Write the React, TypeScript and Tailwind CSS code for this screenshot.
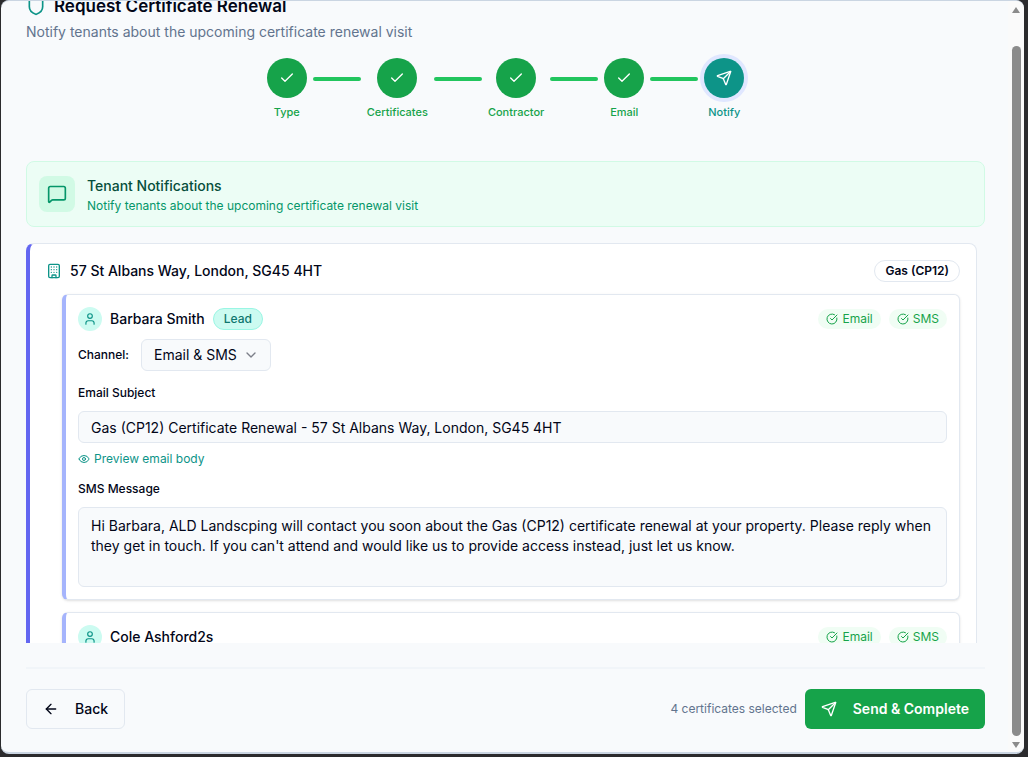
import { ArrowLeft, Building, Check, ChevronDown, CircleCheckBig, Eye, MessageSquare, Send, Shield, User } from 'lucide-react';

const steps = ['Type', 'Certificates', 'Contractor', 'Email', 'Notify'];

interface Tenant {
  id: string;
  name: string;
  lead?: boolean;
  sms: string;
}

const tenants: Tenant[] = [
  {
    id: 'barbara',
    name: 'Barbara Smith',
    lead: true,
    sms: "Hi Barbara, ALD Landscping will contact you soon about the Gas (CP12) certificate renewal at your property. Please reply when they get in touch. If you can't attend and would like us to provide access instead, just let us know.",
  },
  {
    id: 'cole',
    name: 'Cole Ashford2s',
    sms: '',
  },
];

function Stepper() {
  return (
    <ol className="flex items-start justify-center">
      {steps.map((step, index) => {
        const current = index === steps.length - 1;
        return (
          <li key={step} className="flex items-start">
            <div className="flex flex-col items-center">
              <div
                className={`w-10 h-10 rounded-full flex items-center justify-center text-white ${
                  current ? 'bg-[#0d9488] ring-4 ring-indigo-100' : 'bg-[#16a34a]'
                }`}
              >
                {current ? <Send className="w-4 h-4" /> : <Check className="w-4 h-4" />}
              </div>
              <span
                className={`mt-1.5 text-[11px] leading-4 font-medium ${
                  current ? 'text-[#0d9488]' : 'text-[#16a34a]'
                }`}
              >
                {step}
              </span>
            </div>
            {!current && <div className="w-12 h-1 mt-[19px] mx-1.5 rounded-full bg-[#22c55e]" />}
          </li>
        );
      })}
    </ol>
  );
}

function ChannelBadge({ label }: { label: string }) {
  return (
    <span className="flex items-center gap-1 rounded-full bg-green-50 px-2 h-5 text-xs text-[#16a34a]">
      <CircleCheckBig className="w-3 h-3" />
      {label}
    </span>
  );
}

function TenantCard({ tenant }: { tenant: Tenant }) {
  return (
    <div className="bg-white rounded-md border border-l-4 border-slate-200 border-l-[#a5b4fc] shadow-sm p-3">
      <div className="flex items-center justify-between">
        <div className="flex items-center gap-2">
          <span className="w-6 h-6 rounded-full bg-[#ccfbf1] text-[#0d9488] flex items-center justify-center">
            <User className="w-3.5 h-3.5" />
          </span>
          <h3 className="text-sm font-medium text-slate-950">{tenant.name}</h3>
          {tenant.lead && (
            <span className="rounded-full border border-[#99f6e4] bg-[#ccfbf1] px-2.5 text-xs leading-5 font-medium text-[#0f766e]">
              Lead
            </span>
          )}
        </div>
        <div className="flex gap-2">
          <ChannelBadge label="Email" />
          <ChannelBadge label="SMS" />
        </div>
      </div>

      <div className="mt-2 flex items-center gap-3">
        <label htmlFor={`${tenant.id}-channel`} className="text-xs font-medium text-slate-950">
          Channel:
        </label>
        <div className="relative">
          <select
            id={`${tenant.id}-channel`}
            defaultValue="both"
            className="appearance-none w-[130px] h-8 rounded-md border border-slate-200 bg-slate-50 pl-3 pr-8 text-sm text-slate-950"
          >
            <option value="both">Email & SMS</option>
            <option value="email">Email</option>
            <option value="sms">SMS</option>
          </select>
          <ChevronDown className="pointer-events-none absolute right-3 top-2 w-4 h-4 text-slate-950 opacity-50" />
        </div>
      </div>

      <label htmlFor={`${tenant.id}-subject`} className="block mt-3.5 text-xs font-medium text-slate-950">
        Email Subject
      </label>
      <input
        id={`${tenant.id}-subject`}
        type="text"
        defaultValue="Gas (CP12) Certificate Renewal - 57 St Albans Way, London, SG45 4HT"
        className="block w-full h-8 mt-2.5 rounded-md border border-slate-200 bg-slate-50 px-3 text-sm text-slate-950"
      />
      <button type="button" className="mt-2 flex items-center gap-1 text-xs text-[#0d9488]">
        <Eye className="w-3 h-3" />
        Preview email body
      </button>

      <label htmlFor={`${tenant.id}-sms`} className="block mt-3.5 text-xs font-medium text-slate-950">
        SMS Message
      </label>
      <textarea
        id={`${tenant.id}-sms`}
        defaultValue={tenant.sms}
        className="block w-full h-20 mt-2.5 resize-none rounded-md border border-slate-200 bg-slate-50 px-3 py-2 text-sm text-slate-950"
      />
    </div>
  );
}

function ScrollBar() {
  return (
    <div className="w-4 shrink-0 flex flex-col items-center bg-[#fafafa] pt-1.5 pb-1" aria-hidden="true">
      <svg viewBox="0 0 8 6" className="w-2 h-1.5 text-[#8b8b8b]">
        <path d="M4 0 8 6H0z" fill="currentColor" />
      </svg>
      <div className="mt-[33px] mb-1.5 w-[9px] flex-1 rounded-full bg-[#8b8b8b]" />
      <svg viewBox="0 0 8 6" className="w-2 h-1.5 text-[#8b8b8b]">
        <path d="M0 0h8L4 6z" fill="currentColor" />
      </svg>
    </div>
  );
}

export default function App() {
  return (
    <div className="h-screen bg-[#2b2b2d] pl-px pr-1 pb-[3px] font-['Inter',sans-serif]">
      <div className="h-full flex overflow-hidden rounded-lg border-t border-b-2 border-slate-300 bg-slate-50">
        <main className="flex-1 min-w-0 h-full flex flex-col justify-end pl-[25px] pr-[23px] pb-[23px]">
          <header>
            <h1 className="flex items-center gap-2 text-[17px] leading-5 font-semibold text-slate-950">
              <Shield className="w-5 h-5 text-[#0d9488]" />
              Request Certificate Renewal
            </h1>
            <p className="mt-1.5 text-sm text-slate-500">Notify tenants about the upcoming certificate renewal visit</p>
          </header>

          <div className="mt-4">
            <Stepper />
          </div>

          {/* Section banner */}
          <div className="mt-[41px] flex items-center gap-3 rounded-lg border border-[#d1fae5] bg-[#ecfdf5] p-3">
            <div className="w-9 h-9 rounded-lg bg-[#d1fae5] text-[#059669] flex items-center justify-center">
              <MessageSquare className="w-5 h-5" />
            </div>
            <div className="pt-0.5">
              <h2 className="text-sm font-medium text-[#064e3b]">Tenant Notifications</h2>
              <p className="mt-0.5 text-xs text-[#059669]">
                Notify tenants about the upcoming certificate renewal visit
              </p>
            </div>
          </div>

          {/* Properties list */}
          <div className="mt-4 h-[400px] shrink-0 overflow-hidden pr-2">
            <section className="rounded-lg border border-l-4 border-slate-200 border-l-[#6366f1] bg-white p-4">
              <div className="flex items-center justify-between">
                <h2 className="flex items-center gap-2 text-sm font-medium text-slate-950">
                  <Building className="w-4 h-4 text-[#0d9488]" />
                  57 St Albans Way, London, SG45 4HT
                </h2>
                <span className="rounded-full border border-slate-200 px-2.5 text-xs leading-5 font-semibold text-slate-950">
                  Gas (CP12)
                </span>
              </div>
              <div className="mt-3 ml-4 flex flex-col gap-3">
                {tenants.map((tenant) => (
                  <TenantCard key={tenant.id} tenant={tenant} />
                ))}
              </div>
            </section>
          </div>

          <footer className="mt-6 border-t-2 border-slate-100 pt-5 flex items-center justify-between">
            <button
              type="button"
              className="h-10 flex items-center gap-4 rounded-md border border-slate-200 bg-slate-50 px-4 text-sm font-medium text-slate-950"
            >
              <ArrowLeft className="w-4 h-4" />
              Back
            </button>
            <div className="flex items-center gap-2">
              <span className="text-xs text-slate-500">4 certificates selected</span>
              <button
                type="button"
                className="h-10 flex items-center gap-4 rounded-md bg-[#16a34a] px-4 text-sm font-semibold text-white"
              >
                <Send className="w-4 h-4" />
                Send & Complete
              </button>
            </div>
          </footer>
        </main>
        <ScrollBar />
      </div>
    </div>
  );
}
